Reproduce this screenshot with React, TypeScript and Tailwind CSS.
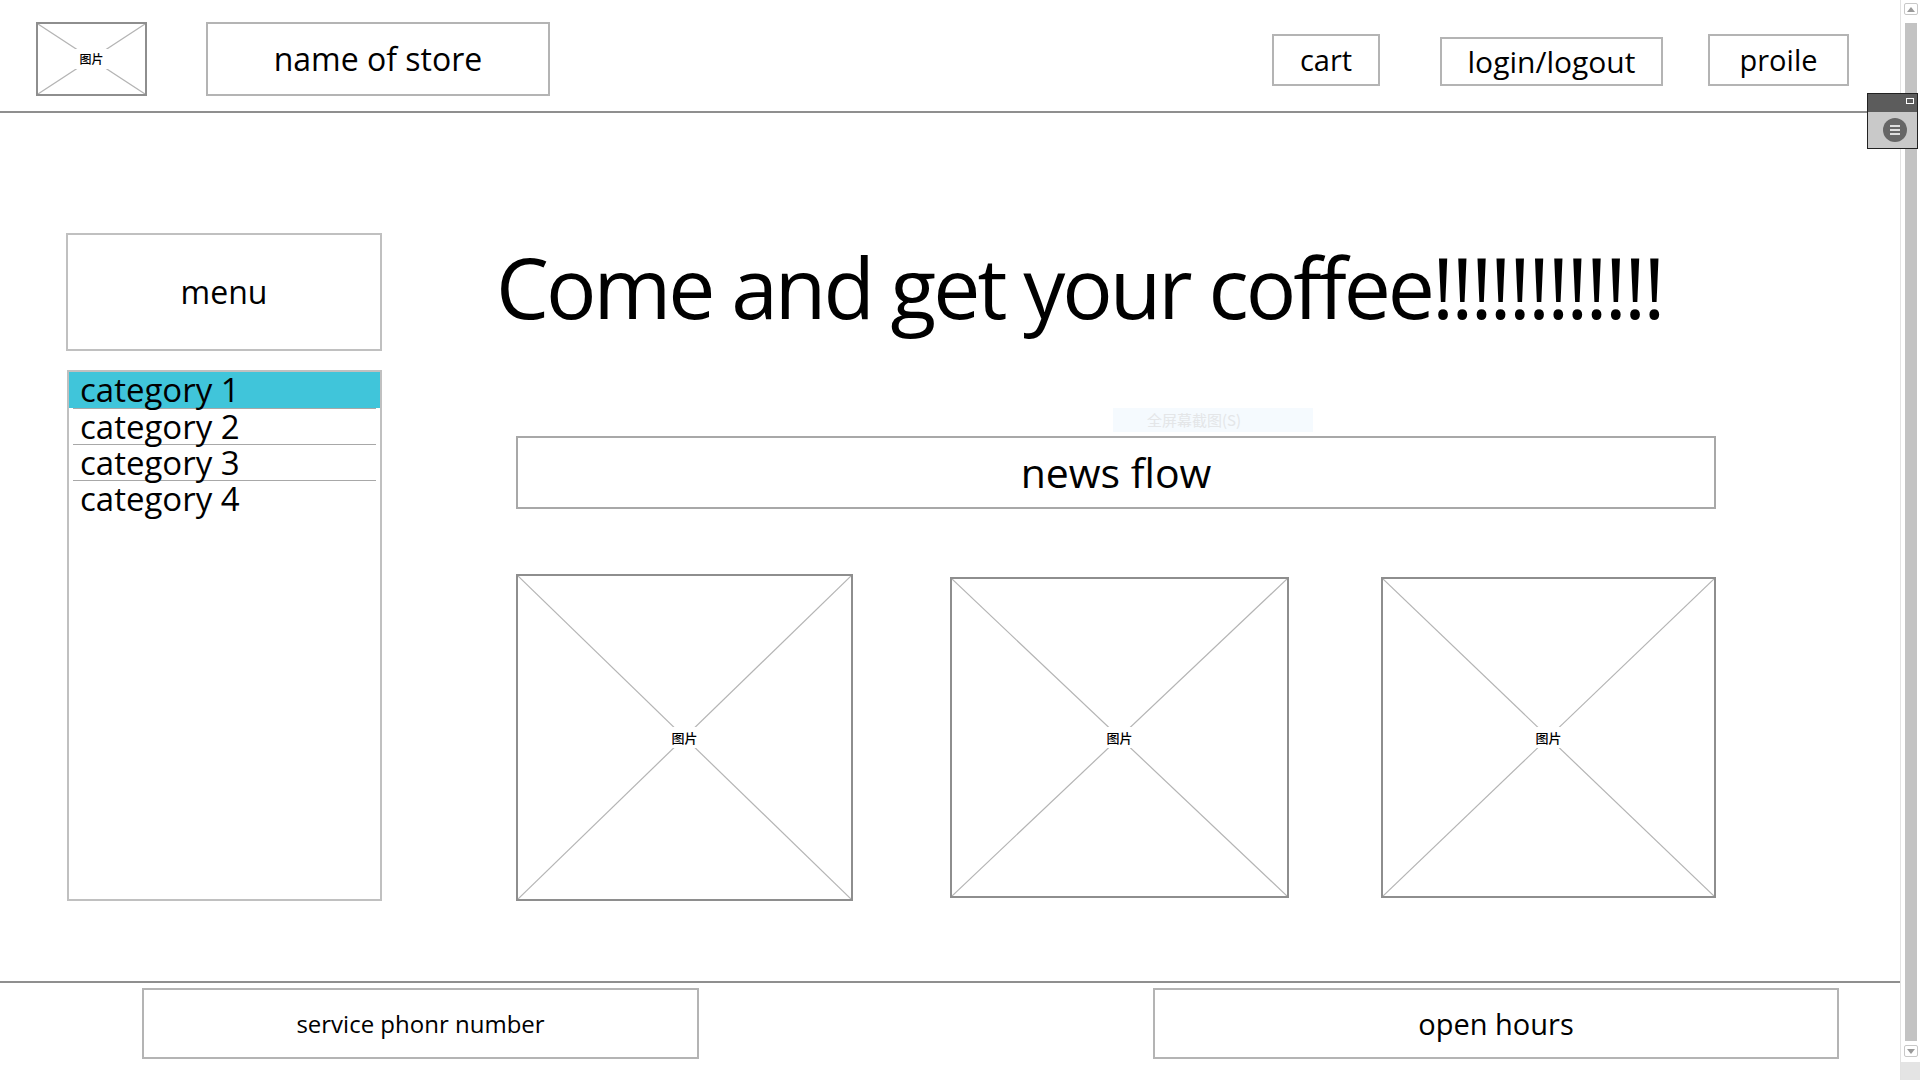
import React from 'react';

const font = { fontFamily: '"Open Sans", "Noto Sans CJK SC", sans-serif' };

// wireframe image placeholder: box with diagonals and a small label in the middle
const Placeholder = ({ className, label = 'text-[13px]' }: { className: string; label?: string }) => (
  <div className={`relative border-2 border-[#8e8e8e] bg-white ${className}`}>
    <svg className="absolute inset-0 w-full h-full" preserveAspectRatio="none" viewBox="0 0 100 100">
      <line x1="0" y1="0" x2="100" y2="100" stroke="#b4b4b4" strokeWidth="1.2" vectorEffect="non-scaling-stroke" />
      <line x1="100" y1="0" x2="0" y2="100" stroke="#b4b4b4" strokeWidth="1.2" vectorEffect="non-scaling-stroke" />
    </svg>
    <div className="absolute inset-0 flex items-center justify-center">
      <span className={`bg-white px-[4px] py-[4px] leading-none font-medium text-black ${label}`} style={{ fontFamily: '"Noto Sans CJK SC", sans-serif' }}>
        图片
      </span>
    </div>
  </div>
);

const categories = ['category 1', 'category 2', 'category 3', 'category 4'];

export default function App() {
  return (
    <div className="relative w-[1920px] h-[1080px] bg-white overflow-hidden flex text-black" style={font}>
      <div className="w-[1900px] flex flex-col">
        {/* header */}
        <header className="h-[111px] flex items-start pl-[36px] pr-[51px] pt-[22px]">
          <Placeholder className="w-[111px] h-[74px]" label="text-[12px]" />
          <div className="ml-[59px] w-[344px] h-[74px] border-2 border-[#b4b4b4] flex items-center justify-center text-[32px]">
            name of store
          </div>
          <div className="ml-auto flex items-start">
            <div className="mt-[12px] w-[108px] h-[52px] border-2 border-[#b4b4b4] flex items-center justify-center text-[29px]">
              cart
            </div>
            <div className="ml-[60px] mt-[15px] w-[223px] h-[49px] border-2 border-[#b4b4b4] flex items-center justify-center text-[30px]">
              login/logout
            </div>
            <div className="ml-[45px] mt-[12px] w-[141px] h-[52px] border-2 border-[#b4b4b4] flex items-center justify-center text-[29px]">
              proile
            </div>
          </div>
        </header>
        <div className="h-[2px] bg-[#8f8f8f]" />

        {/* body */}
        <main className="h-[868px] flex">
          <aside className="pl-[66px] pt-[120px] w-[382px]">
            <div className="w-[316px] h-[118px] border-2 border-[#c0c0c0] flex items-center justify-center text-[32px]">
              menu
            </div>
            <div className="mt-[19px] ml-[1px] w-[315px] h-[531px] border-2 border-[#c0c0c0]">
              {categories.map((c, i) => (
                <div
                  key={c}
                  className={`h-[36px] text-[33px] leading-[36px] whitespace-nowrap ${
                    i === 0 ? 'bg-[#40c5da] pl-[11px]' : 'mx-[4px] pl-[7px] border-t border-[#a8a8a8]'
                  }`}
                >
                  {c}
                </div>
              ))}
            </div>
          </aside>

          <section className="ml-[134px] w-[1200px] pt-[132px]">
            <h1 className="-ml-[20px] text-[84px] leading-[84px] tracking-[-3px] whitespace-nowrap">Come and get your coffee!!!!!!!!!!!!</h1>
            <div className="mt-[107px] h-[73px] border-2 border-[#a8a8a8] flex items-center justify-center text-[41px]">
              news flow
            </div>
            <div className="mt-[65px] flex items-start">
              <Placeholder className="w-[337px] h-[327px]" />
              <Placeholder className="ml-[97px] mt-[3px] w-[339px] h-[321px]" />
              <Placeholder className="ml-[92px] mt-[3px] w-[335px] h-[321px]" />
            </div>
          </section>
        </main>

        {/* footer */}
        <div className="h-[2px] bg-[#8f8f8f]" />
        <footer className="pt-[5px] pl-[142px] flex items-start">
          <div className="w-[557px] h-[71px] border-2 border-[#b4b4b4] flex items-center justify-center text-[24px]">
            service phonr number
          </div>
          <div className="ml-[454px] w-[686px] h-[71px] border-2 border-[#b4b4b4] flex items-center justify-center text-[29px]">
            open hours
          </div>
        </footer>
      </div>

      {/* window scrollbar */}
      <div className="w-[20px] h-[1080px] border-l border-[#e2e2e2] bg-white flex flex-col items-center">
        <div className="mt-[3px] w-[14px] h-[12px] border border-[#c8c8c8] rounded-[2px] flex items-center justify-center">
          <svg width="8" height="5" viewBox="0 0 8 5"><path d="M0 5 L4 0 L8 5 Z" fill="#9a9a9a" /></svg>
        </div>
        <div className="mt-[8px] w-[12px] h-[1018px] bg-[#c3c3c3]" />
        <div className="mt-[4px] w-[14px] h-[12px] border border-[#c8c8c8] rounded-[2px] flex items-center justify-center">
          <svg width="8" height="5" viewBox="0 0 8 5"><path d="M0 0 L4 5 L8 0 Z" fill="#9a9a9a" /></svg>
        </div>
        <div className="mt-auto w-full h-[18px] bg-[#e4e4e4]" />
      </div>

      {/* floating capture widget */}
      <div className="absolute left-[1867px] top-[93px] w-[51px] h-[56px] border border-[#222] flex flex-col">
        <div className="h-[18px] bg-[#5c5c5c] flex justify-end items-start pr-[3px] pt-[4px]">
          <div className="w-[8px] h-[6px] border border-white" />
        </div>
        <div className="flex-1 bg-[#c9c9c9] flex items-center pl-[15px]">
          <div className="w-[24px] h-[24px] rounded-full bg-[#666] flex flex-col items-center justify-center gap-[2px]">
            <div className="w-[10px] h-[2px] bg-[#ddd]" />
            <div className="w-[10px] h-[2px] bg-[#ddd]" />
            <div className="w-[10px] h-[2px] bg-[#ddd]" />
          </div>
        </div>
      </div>

      {/* faint menu tooltip */}
      <div
        className="absolute left-[1113px] top-[408px] w-[200px] h-[24px] bg-[#f5fafe] text-[#e4e6e8] text-[15px] leading-[24px] pl-[34px]"
        style={{ fontFamily: '"Noto Sans CJK SC", sans-serif' }}
      >
        全屏幕截图(S)
      </div>
    </div>
  );
}
